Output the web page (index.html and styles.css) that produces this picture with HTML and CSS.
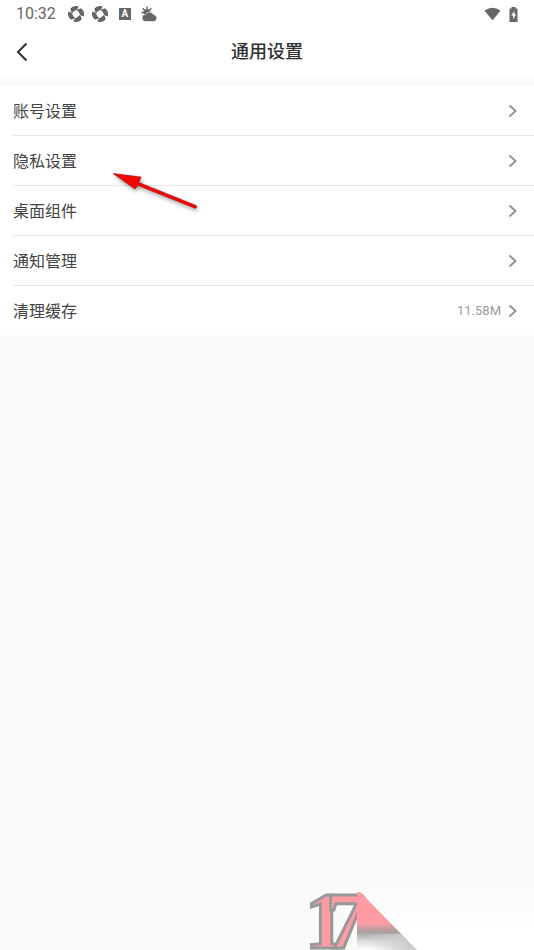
FILE: index.html
```html
<!DOCTYPE html>
<html lang="zh-CN">
<head>
<meta charset="utf-8">
<meta name="viewport" content="width=device-width, initial-scale=1">
<title>通用设置</title>
<link rel="stylesheet" href="styles.css">
</head>
<body>
<svg class="defs" aria-hidden="true">
  <symbol id="chevron" viewBox="0 0 10 14"><path d="M1.5 1.5 7.5 7l-6 5.5" fill="none" stroke="#949494" stroke-width="2"/></symbol>
  <symbol id="shutter" viewBox="0 0 16 16">
    <g fill="#666">
      <path id="blade" d="M2.200 2.800A8 8 0 0 1 10.600.4L9 3.800Q6.500 4.500 3.800 7.300Z"/>
      <use href="#blade" transform="rotate(90 8 8)"/>
      <use href="#blade" transform="rotate(180 8 8)"/>
      <use href="#blade" transform="rotate(270 8 8)"/>
    </g>
  </symbol>
</svg>
<div class="status">
  <span class="time">10:32</span>
  <svg class="shutter" aria-hidden="true"><use href="#shutter"/></svg>
  <svg class="shutter" aria-hidden="true"><use href="#shutter"/></svg>
  <span class="keyboard">A</span>
  <svg class="weather" viewBox="0 0 16 16" aria-hidden="true">
    <path d="M5.500.5v3M1.200 2.200l2 2M9.800 2.200l-2 2M0 6.500h2.500M1.200 10.800l2-2" stroke="#666" stroke-width="1.400"/>
    <circle cx="5.500" cy="6.500" r="3.500" fill="#666"/>
    <path d="M4.200 15.500a3.500 3.500 0 0 1-.2-7A4.600 4.600 0 0 1 12.300 8.800 3.400 3.400 0 0 1 12.600 15.500Z" fill="#666" stroke="#fff" stroke-width=".6"/>
  </svg>
  <svg class="wifi" viewBox="0 0 18 14" aria-hidden="true"><path d="M.5 3.500Q9-2.800 17.500 3.500L9 13.500Z" fill="#666"/></svg>
  <svg class="battery" viewBox="0 0 9 15" aria-hidden="true"><path d="M2.500 0h4v1.500H8.500V15H.5V1.500h2Z" fill="#666"/><path d="M5.500 3.500 2.200 8.500h2v4L7 7.200H5.300Z" fill="#fff"/></svg>
</div>
<header class="bar">
  <button class="back" type="button" aria-label="返回"><svg viewBox="0 0 12 20" aria-hidden="true"><path d="M10.500 1.500 2 10l8.500 8.500" fill="none" stroke="#303030" stroke-width="2"/></svg></button>
  <h1>通用设置</h1>
</header>
<main class="list">
  <a class="row" href="#account"><span class="label">账号设置</span><svg class="chevron" aria-hidden="true"><use href="#chevron"/></svg></a>
  <a class="row" href="#privacy"><span class="label">隐私设置</span><svg class="chevron" aria-hidden="true"><use href="#chevron"/></svg></a>
  <a class="row" href="#widgets"><span class="label">桌面组件</span><svg class="chevron" aria-hidden="true"><use href="#chevron"/></svg></a>
  <a class="row" href="#notifications"><span class="label">通知管理</span><svg class="chevron" aria-hidden="true"><use href="#chevron"/></svg></a>
  <a class="row" href="#cache"><span class="label">清理缓存</span><span class="value">11.58M</span><svg class="chevron" aria-hidden="true"><use href="#chevron"/></svg></a>
  <svg class="pointer" viewBox="0 0 100 50" aria-hidden="true">
    <path d="M3 3.500 31 7 29 12.500 86 35.500Q88 38 85 38.300L28 15.500 25 19Z" fill="#f20505" stroke="#a51414" stroke-width=".6"/>
  </svg>
</main>
<svg class="mark" viewBox="0 0 244 70" aria-hidden="true">
  <defs>
    <linearGradient id="shade" gradientUnits="userSpaceOnUse" x1="0" y1="11" x2="0" y2="70"><stop offset="0" stop-color="#ff9ca3"/><stop offset=".54" stop-color="#ff9ca3"/><stop offset=".7" stop-color="#a6a0a0"/><stop offset=".85" stop-color="#ddd"/><stop offset="1" stop-color="#fff"/></linearGradient>
    <linearGradient id="side" gradientUnits="userSpaceOnUse" x1="78" y1="65" x2="112" y2="50"><stop offset="0" stop-color="#ccc" stop-opacity="0"/><stop offset="1" stop-color="#ccc"/></linearGradient>
    <linearGradient id="glow" x1="0" y1="0" x2="0" y2="1"><stop offset="0" stop-color="#fff" stop-opacity="0"/><stop offset=".7" stop-color="#fff"/></linearGradient>
    <clipPath id="edge"><path d="M0 0H59L127 70H0Z"/></clipPath>
  </defs>
  <path d="M70 10H244V70H70Z" fill="url(#glow)"/>
  <g clip-path="url(#edge)"><text class="digits" x="15 36" y="68">17</text></g>
  <path d="M67 12H70L127 70H67Z" fill="url(#shade)"/>
  <path d="M80 54H111L127 70H80Z" fill="url(#side)"/>
</svg>
</body>
</html>
```
FILE: styles.css
```css
* { box-sizing: border-box; }
body {
  margin: 0;
  min-height: 100vh;
  position: relative;
  background: #fafafa;
  color: #444;
  font-family: Roboto, "Noto Sans CJK SC", sans-serif;
}
svg { display: block; flex: none; }
.defs { position: absolute; width: 0; height: 0; }
.status {
  display: flex;
  align-items: center;
  height: 28px;
  padding: 0 16px;
  background: #fff;
  color: #666;
}
.time { font-size: 16px; line-height: 20px; margin-right: 12px; }
.shutter { width: 16px; height: 16px; margin-right: 8px; }
.keyboard {
  width: 12px;
  margin: 0 10px 0 3px;
  background: #666;
  color: #fff;
  font-size: 10px;
  font-weight: 700;
  line-height: 12px;
  text-align: center;
}
.weather { width: 17px; height: 16px; }
.wifi { width: 17px; height: 14px; margin-left: auto; margin-right: 8px; }
.battery { width: 9px; height: 15px; }
.bar {
  display: grid;
  grid-template-columns: 44px 1fr 44px;
  align-items: center;
  height: 48px;
  background: #fff;
}
.back {
  display: flex;
  align-items: center;
  height: 48px;
  padding: 0 16px;
  border: 0;
  background: none;
}
.back svg { width: 12px; height: 20px; }
h1 {
  margin: 0;
  color: #303030;
  font-size: 18px;
  font-weight: 500;
  line-height: 24px;
  text-align: center;
}
.list {
  position: relative;
  margin-top: 10px;
  padding-left: 13px;
  background: #fff;
}
.row {
  display: flex;
  align-items: center;
  justify-content: space-between;
  height: 50px;
  padding-right: 16px;
  border-bottom: 1px solid #e9e9e9;
  color: inherit;
  font-size: 16px;
  line-height: 24px;
  text-decoration: none;
}
.row:nth-of-type(5) { height: 49px; border-bottom: 0; }
.label { padding-top: 2px; }
.value { margin-left: auto; margin-right: 7px; color: #999; font-size: 13px; }
.chevron { width: 10px; height: 14px; }
.pointer {
  position: absolute;
  top: 84px;
  left: 110px;
  width: 100px;
  height: 50px;
  filter: drop-shadow(1px 2px 2px #0006);
  pointer-events: none;
}
.mark {
  position: absolute;
  right: 0;
  bottom: 0;
  width: 244px;
  height: 70px;
}
.digits {
  fill: #ff9ca3;
  stroke: #999;
  stroke-width: 3px;
  font-family: "Liberation Serif", serif;
  font-size: 80px;
  font-weight: 700;
}
```
